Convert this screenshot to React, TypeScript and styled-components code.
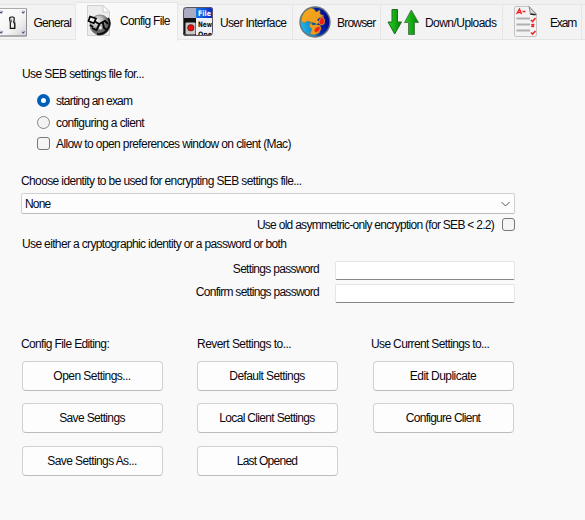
import React from 'react';
import styled, { createGlobalStyle, css } from 'styled-components';

const Global = createGlobalStyle`
  * { box-sizing: border-box; }
  html, body { margin: 0; background: #f9f9f9; }
`;

const Window = styled.main`
  width: 585px;
  height: 520px;
  overflow: hidden;
  background: #f9f9f9;
  color: #080810;
  font: 12px/16px "Liberation Sans", Arial, sans-serif;
`;

const Text = styled.span<{ $track?: number }>`
  letter-spacing: ${(p) => p.$track ?? -0.6}px;
  white-space: pre;
`;

const TabBar = styled.nav`
  display: flex;
  align-items: flex-start;
  height: 41px;
  padding-top: 2px;
  background: linear-gradient(#f0f0f0 0 39px, #f9f9f9 39px);
`;

const Tab = styled.div<{ $width: number; $pad: number; $active?: boolean }>`
  display: flex;
  flex: none;
  align-items: center;
  width: ${(p) => p.$width}px;
  height: 36px;
  margin-top: 2px;
  padding-left: ${(p) => p.$pad}px;
  background: #f3f3f3;
  border: solid #e5e5e5;
  border-width: 1px 1px 1px 0;
  ${(p) => p.$active && css`
    height: 39px;
    margin-top: 0;
    padding-bottom: 3px;
    background: #f9f9f9;
    border-bottom: 0;
  `}
`;

const TabLabel = styled(Text)<{ $gap: number }>`
  margin-left: ${(p) => p.$gap}px;
  padding-top: 1px;
`;

const Icon = styled.svg`
  display: block;
  flex: none;
`;

const Content = styled.section`
  width: 515px;
  padding: 25px 0 0 22px;
`;

const OptionList = styled.div`
  display: flex;
  flex-direction: column;
  padding: 11px 0 0 15px;
`;

const Option = styled.label<{ $height?: number }>`
  display: flex;
  align-items: center;
  gap: 6px;
  height: ${(p) => p.$height ?? 22}px;
`;

const Radio = styled.input.attrs({ type: 'radio' })`
  appearance: none;
  width: 13px;
  height: 13px;
  margin: 0;
  border: 1px solid #858585;
  border-radius: 50%;
  background: #f3f3f3;
  &:checked { border: 4px solid #005fb8; background: #fff; }
`;

const Check = styled.input.attrs({ type: 'checkbox' })`
  appearance: none;
  width: 13px;
  height: 13px;
  margin: 0;
  border: 1px solid #777;
  border-radius: 3px;
  background: #f5f5f5;
`;

const Line = styled.div<{ $top?: number; $shift?: number }>`
  display: flex;
  height: 16px;
  margin-top: ${(p) => p.$top ?? 0}px;
  margin-left: ${(p) => p.$shift ?? 0}px;
`;

const Combo = styled.div`
  display: flex;
  align-items: center;
  justify-content: space-between;
  height: 21px;
  margin: 4px 0 0 -1px;
  padding: 1px 3px 0;
  background: #fdfdfd;
  border: 1px solid #d0d0d0;
  border-bottom-color: #bbb;
  border-radius: 2px;
`;

const RightOption = styled(Option)`
  justify-content: flex-end;
  gap: 8px;
  height: 21px;
`;

const Fields = styled.div`
  margin-top: 9px;
`;

const FieldRow = styled.label`
  display: grid;
  grid-template-columns: 297px 180px;
  justify-content: end;
  column-gap: 16px;
  height: 23px;
  text-align: right;
`;

const Password = styled.input.attrs({ type: 'password' })`
  appearance: none;
  height: 19px;
  border: 1px solid #e5e5e5;
  border-bottom-color: #868686;
  border-radius: 2px;
  background: #fff;
`;

const Actions = styled.div`
  display: flex;
  gap: 34px;
  margin-top: 29px;
`;

const Column = styled.div<{ $nudge?: number; $heading: number }>`
  flex: none;
  width: 141px;
  margin-left: ${(p) => p.$nudge ?? 0}px;
  & > :first-child {
    display: block;
    height: 25px;
    margin-left: ${(p) => p.$heading}px;
  }
`;

const Button = styled.button`
  display: flex;
  align-items: center;
  justify-content: center;
  width: 141px;
  height: 30px;
  margin: 0 0 12px;
  padding: 0 1px 0 0;
  border: 1px solid #d1d1d1;
  border-bottom-color: #bbb;
  border-radius: 4px;
  background: #fdfdfd;
  color: inherit;
  font: inherit;
  & + & + & { margin-top: 13px; }
`;

const SwitchIcon = () => (
  <Icon width="28" height="30" viewBox="0 0 28 30">
    <defs>
      <linearGradient id="plate" x2="1" y2="1"><stop stopColor="#fff" /><stop offset=".6" stopColor="#f3f3f3" /><stop offset="1" stopColor="#d0d0d4" /></linearGradient>
    </defs>
    <path d="M0 1.5H26.5V29H0" fill="url(#plate)" stroke="#aaa" />
    <path d="M26.5 2V29H0" fill="none" stroke="#8d8d8d" />
    {[[1, 5], [23, 5], [1, 25], [23, 25]].map(([x, y]) => (
      <g key={`${x}-${y}`}><circle cx={x} cy={y} r="1.7" fill="#c7c9dd" /><path d={`M${x - 1} ${y}l1.4 1.2 1-1.8`} fill="none" stroke="#45456a" /></g>
    ))}
    <path d="M13 12 16 15V22H13Z" fill="#bbb" />
    <path d="M9.7 12Q9.3 10 11.5 10H13Q14.5 10.2 14.3 12L13.7 15 14.7 17V21.3H10.3V16Z" fill="#eee" stroke="#111" strokeWidth="1.2" />
    <path d="M11.5 12.5V15.5" stroke="#777" strokeWidth="1.2" />
  </Icon>
);

const ConfigIcon = () => (
  <Icon width="25" height="32" viewBox="0 0 25 32">
    <defs><radialGradient id="gear" cx=".35" cy=".3"><stop stopColor="#f2f2f2" /><stop offset=".6" stopColor="#b5b5b5" /><stop offset="1" stopColor="#666" /></radialGradient></defs>
    <path d="M.5 .5H16L22.5 7V30.5H.5Z" fill="#ededed" stroke="#d0d0d0" />
    <path d="M16 .5V7H22.5Z" fill="#fff" stroke="#ccc" />
    <circle cx="13" cy="20" r="10" fill="url(#gear)" stroke="#888" />
    <path d="M21 13Q25 19 20 25Q16 30 10 29" fill="none" stroke="#111" strokeWidth="2" />
    <path d="M3 11.5 9 13.5 6.8 18.2 1.5 16Z" fill="#eee" stroke="#000" strokeWidth="1.7" />
    <path d="M8 16.5 12 19 18 16 21 19M12.5 19 9.5 25 5 23M16 18 17 23 20 25M3 20 6 22" fill="none" stroke="#050505" strokeWidth="1.9" />
    <circle cx="13.5" cy="23" r="1.4" fill="#eee" />
  </Icon>
);

const IconText = styled.text`
  font-family: "DejaVu Sans", sans-serif;
  font-weight: 700;
  letter-spacing: 0;
`;

const InterfaceIcon = () => (
  <Icon width="30" height="30" viewBox="0 0 30 30">
    <defs>
      <clipPath id="menuClip"><rect width="30" height="29" rx="3" /></clipPath>
      <linearGradient id="menuBlue" x2="1"><stop stopColor="#1979e8" /><stop offset="1" stopColor="#0026c8" /></linearGradient>
    </defs>
    <g clipPath="url(#menuClip)">
      <rect width="30" height="30" fill="#f0f0f7" />
      <rect width="13" height="11" fill="#aaaac2" />
      <rect x="13" width="17" height="11" fill="url(#menuBlue)" />
      <rect y="11" width="13" height="19" fill="#111" />
      <rect x="2.5" y="15.5" width="10" height="12" rx="1" fill="#c8c8c8" />
      <circle cx="7.8" cy="20.8" r="3.5" fill="#7b1717" /><circle cx="7.8" cy="20.8" r="2.6" fill="#f10b0b" />
      <IconText x="15" y="8.5" fontSize="7.5" textLength="13" lengthAdjust="spacingAndGlyphs" fill="#fff">File</IconText>
      <IconText x="15" y="20" fontSize="7.5" textLength="14" lengthAdjust="spacingAndGlyphs" fill="#111">New</IconText>
      <IconText x="15" y="30" fontSize="7.5" textLength="14" lengthAdjust="spacingAndGlyphs" fill="#111">Ope</IconText>
    </g>
    <rect x=".5" y=".5" width="29" height="28" rx="3" fill="none" stroke="#555563" />
  </Icon>
);

const GlobeIcon = () => (
  <Icon width="32" height="32" viewBox="0 0 32 32">
    <defs>
      <linearGradient id="ocean" x1="0" y1=".7" x2="1" y2=".4"><stop stopColor="#20bded" /><stop offset=".35" stopColor="#128bd0" /><stop offset=".6" stopColor="#0726ad" /><stop offset="1" stopColor="#000785" /></linearGradient>
      <linearGradient id="fox" x2="1" y2="1"><stop stopColor="#f5aa18" /><stop offset="1" stopColor="#e99522" /></linearGradient>
    </defs>
    <circle cx="16" cy="16" r="15" fill="url(#ocean)" stroke="#68747c" strokeWidth="1.4" />
    <path d="M2 15Q3 5 12 2L15 3 17 6 21 4 21 8 25 10 20 12 18 14 21 16 17 19 21 19 22 23 20 27 15 29 11 28 13 23 10 20 12 16 8 15 5 17Z" fill="url(#fox)" stroke="#8a7b36" strokeWidth=".5" />
    <path d="M21 12.5 24 11 25.5 14 25 18 22 19 20 17ZM16 22 20 20 21.5 22 20 25 17 27 15 25Z" fill="#f02116" stroke="#e8942a" strokeWidth=".8" />
    <path d="M12 16.5Q16 16 17.5 18Q15 20 13 18.5" fill="#0b579a" />
  </Icon>
);

const ArrowsIcon = () => (
  <Icon width="33" height="28" viewBox="0 0 33 28">
    <defs><linearGradient id="arrow" x2="1"><stop stopColor="#22cf22" /><stop offset=".55" stopColor="#10a910" /><stop offset="1" stopColor="#087808" /></linearGradient></defs>
    <path d="M5 1.5H10.5V14H14.5L7.7 26 1 14H5Z" fill="url(#arrow)" stroke="#246824" />
    <path d="M24.3 2 31.5 14.5H27.5V26.5H21.5V14.5H17.5Z" fill="url(#arrow)" stroke="#517d51" />
  </Icon>
);

const ExamIcon = () => (
  <Icon width="25" height="32" viewBox="0 0 25 32">
    <path d="M.5 2Q.5 .5 2 .5H15L22.5 8V29Q22.5 30.5 21 30.5H2Q.5 30.5 .5 29Z" fill="#f3f3f3" stroke="#c4c4c4" />
    <path d="M15 .5 22.5 8.5H16.5Z" fill="#ddd" stroke="#888" />
    <path d="M16.5 8 21.5 8.8" stroke="#222" strokeWidth="1.4" />
    <path d="M2.5 12.5H16M2.5 18.5H16M2.5 24.5H16" stroke="#b0b0b0" strokeWidth="1.9" />
    <path d="M2.5 8 5.5 3 7.5 8M4 6.5H7M8.5 5.5H11.5" fill="none" stroke="#ee2424" strokeWidth="1.4" />
    <path d="M17 14 18.5 15.5 21.5 12M17.5 18 20 21M20 18 17.5 21M17 26.5 18.5 28 21.5 25" fill="none" stroke="#f32626" strokeWidth="1.6" />
  </Icon>
);

const TABS = [
  { label: 'General', width: 76, pad: 0, gap: 5.5, track: -0.72, icon: <SwitchIcon /> },
  { label: 'Config File', width: 102, pad: 11, gap: 8, track: -0.7, icon: <ConfigIcon />, active: true },
  { label: 'User Interface', width: 115, pad: 5, gap: 7, track: -0.65, icon: <InterfaceIcon /> },
  { label: 'Browser', width: 88, pad: 6, gap: 6, track: -0.8, icon: <GlobeIcon /> },
  { label: 'Down/Uploads', width: 122, pad: 6, gap: 5, track: -0.55, icon: <ArrowsIcon /> },
  { label: 'Exam', width: 79, pad: 11, gap: 11, track: -1.15, icon: <ExamIcon /> },
  { label: '', width: 40, pad: 0, gap: 0, track: 0, icon: null },
];

type Entry = [label: string, track: number];
const COLUMNS: { heading: Entry; shift: number; nudge?: number; buttons: Entry[] }[] = [
  { heading: ['Config File Editing:', -0.63], shift: -1, buttons: [['Open Settings...', -0.55], ['Save Settings', -0.66], ['Save Settings As...', -0.59]] },
  { heading: ['Revert Settings to...', -0.54], shift: 0, buttons: [['Default Settings', -0.59], ['Local Client Settings', -0.67], ['Last Opened', -0.74]] },
  { heading: ['Use Current Settings to...', -0.64], shift: -2, nudge: 1, buttons: [['Edit Duplicate', -0.55], ['Configure Client', -0.73]] },
];

export default function App() {
  return (
    <Window>
      <Global />
      <TabBar>
        {TABS.map((t) => (
          <Tab key={t.label} $width={t.width} $pad={t.pad} $active={t.active}>
            {t.icon}
            <TabLabel $gap={t.gap} $track={t.track}>{t.label}</TabLabel>
          </Tab>
        ))}
      </TabBar>
      <Content>
        <Line><Text $track={-0.6}>Use SEB settings file for...</Text></Line>
        <OptionList>
          <Option $height={15}><Radio name="purpose" defaultChecked /><Text $track={-0.78}>starting an exam</Text></Option>
          <Option $height={29}><Radio name="purpose" /><Text $track={-0.6}>configuring a client</Text></Option>
          <Option $height={13}><Check /><Text $track={-0.61}>Allow to open preferences window on client (Mac)</Text></Option>
        </OptionList>
        <Line $top={23} $shift={-1}><Text $track={-0.62}>Choose identity to be used for encrypting SEB settings file...</Text></Line>
        <Combo>
          <Text $track={-0.8}>None</Text>
          <Icon width="11" height="7" viewBox="0 0 11 7"><path d="M1.5 1 5.5 5 9.5 1" fill="none" stroke="#555" /></Icon>
        </Combo>
        <RightOption><Text $track={-0.72}>Use old asymmetric-only encryption (for SEB &lt; 2.2)</Text><Check /></RightOption>
        <Line $top={1}><Text $track={-0.64}>Use either a cryptographic identity or a password or both</Text></Line>
        <Fields>
          <FieldRow><Text $track={-0.7}>Settings password</Text><Password /></FieldRow>
          <FieldRow><Text $track={-0.73}>Confirm settings password</Text><Password /></FieldRow>
        </Fields>
        <Actions>
          {COLUMNS.map((c) => (
            <Column key={c.heading[0]} $heading={c.shift} $nudge={c.nudge}>
              <Text $track={c.heading[1]}>{c.heading[0]}</Text>
              {c.buttons.map(([label, track]) => (
                <Button key={label}><Text $track={track}>{label}</Text></Button>
              ))}
            </Column>
          ))}
        </Actions>
      </Content>
    </Window>
  );
}
